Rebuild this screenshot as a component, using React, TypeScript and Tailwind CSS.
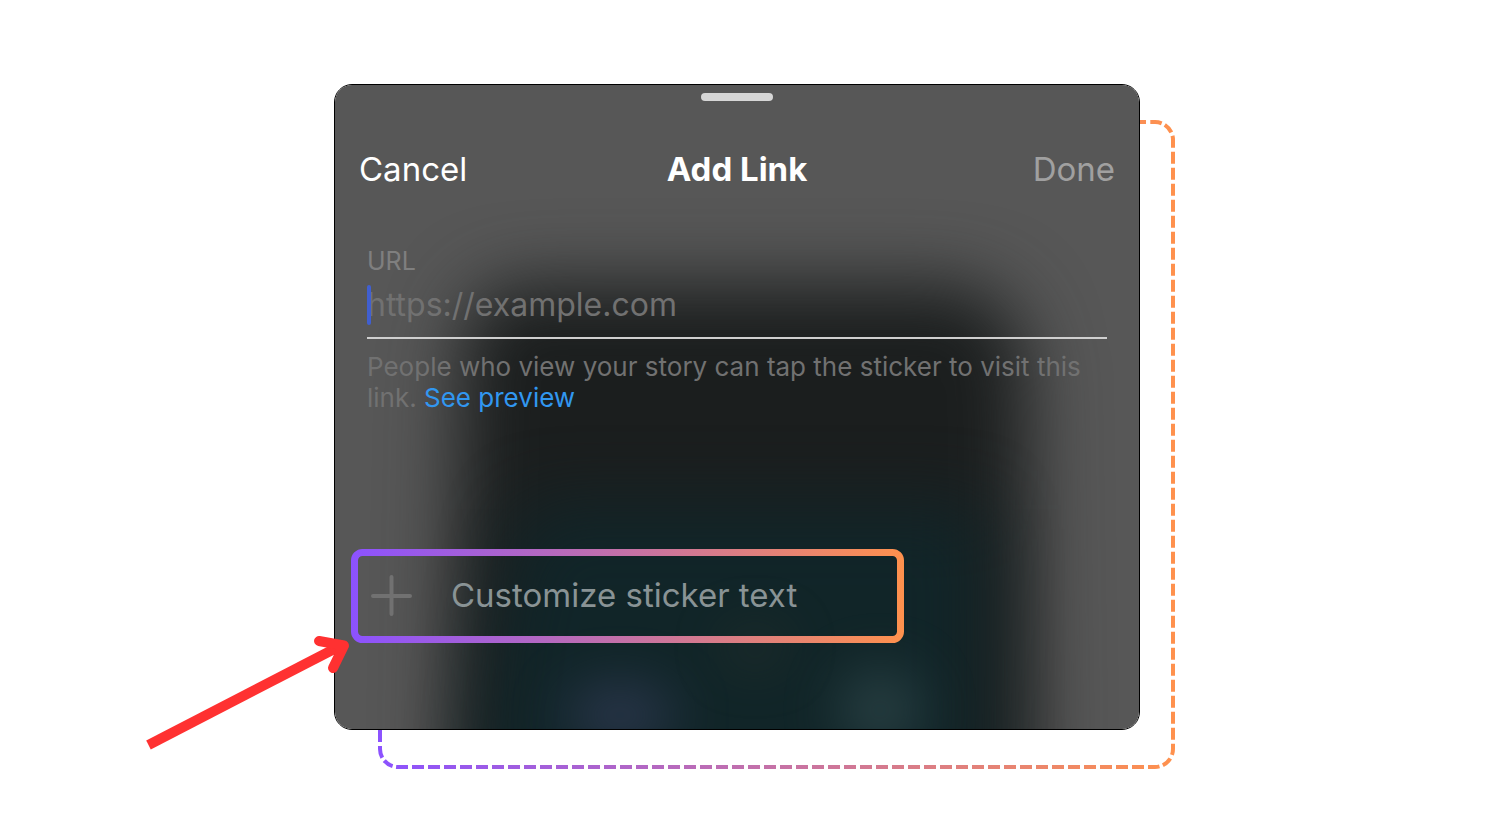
import React from "react";

function SheetBackdrop() {
  return (
    <svg
      aria-hidden="true"
      className="absolute inset-0 -z-10 h-full w-full bg-[#575757]"
      viewBox="0 0 804 644"
      preserveAspectRatio="none"
    >
      <defs>
        <filter id="soft" filterUnits="userSpaceOnUse" x="-150" y="0" width="1100" height="900" colorInterpolationFilters="sRGB">
          <feGaussianBlur stdDeviation="36" />
        </filter>
        <filter id="glow" filterUnits="userSpaceOnUse" x="-150" y="200" width="1100" height="700" colorInterpolationFilters="sRGB">
          <feGaussianBlur stdDeviation="28" />
        </filter>
      </defs>
      <path
        d="M190 200H610Q685 200 692 290L700 800H114L126 270Q132 200 190 200Z"
        fill="#1b1e1e"
        filter="url(#soft)"
      />
      <path d="M190 420H650V800H130L160 540Z" fill="#10262a" opacity="0.9" filter="url(#soft)" />
      <ellipse cx="285" cy="630" rx="55" ry="30" fill="#333c58" opacity="0.8" filter="url(#glow)" />
      <ellipse cx="545" cy="625" rx="40" ry="40" fill="#30484c" opacity="0.8" filter="url(#glow)" />
      <ellipse cx="420" cy="562" rx="30" ry="14" fill="#3a3a30" opacity="0.6" filter="url(#glow)" />
    </svg>
  );
}

function DashedFrame() {
  return (
    <svg
      aria-hidden="true"
      className="absolute top-9 left-11 -z-10 h-[calc(100%+3px)] w-[calc(100%-9px)]"
      viewBox="378 120 797 649"
      preserveAspectRatio="none"
      fill="none"
    >
      <defs>
        <linearGradient id="frame" gradientUnits="userSpaceOnUse" x1="378" y1="0" x2="1175" y2="0">
          <stop stopColor="#8c52ff" />
          <stop offset="1" stopColor="#ff914d" />
        </linearGradient>
      </defs>
      <g stroke="url(#frame)" strokeWidth="4">
        <path d="M1138 122H1155A18 18 0 0 1 1173 140" strokeDasharray="8 4.3 11.5 3.5 10 3.5 20" />
        <path d="M1173 140V749" strokeDasharray="12 4" strokeDashoffset="4.3" />
        <path d="M1173 749A18 18 0 0 1 1155 767" strokeDasharray="6 4 10 3.5 10" />
        <path d="M1155 767H398" strokeDasharray="12 4" strokeDashoffset="5" />
        <path d="M398 767A18 18 0 0 1 380 749" strokeDasharray="2 3.5 10 3.5 12" />
        <path d="M380 749V710" strokeDasharray="12 4" strokeDashoffset="9" />
      </g>
    </svg>
  );
}

function Arrow() {
  return (
    <svg
      aria-hidden="true"
      className="pointer-events-none absolute top-[548px] -left-[190px] h-[122px] w-[210px]"
      viewBox="144 632 210 122"
      fill="none"
      stroke="#ff3131"
    >
      <path d="M148.500 745L340 646" strokeWidth="10" />
      <path d="M319 641L344 645.500L333 668" strokeWidth="10" strokeLinecap="round" strokeLinejoin="round" />
    </svg>
  );
}

export default function App() {
  return (
    <main className="min-h-screen bg-white pt-21 pr-6 pb-24 font-['Inter',sans-serif]">
      <div className="relative isolate mx-auto w-full max-w-[806px]">
        <DashedFrame />
        <section
          aria-labelledby="sheet-title"
          className="relative isolate overflow-hidden rounded-[18px] border border-black px-6 pt-2 pb-[85px]"
        >
          <SheetBackdrop />
          <div className="mx-auto h-2 w-[72px] rounded-full bg-[#d6d6d6]" />
          <header className="mt-12 grid grid-cols-3 items-center text-[33px] leading-10 text-white">
            <button type="button" className="justify-self-start">Cancel</button>
            <h1 id="sheet-title" className="justify-self-center font-bold">Add Link</h1>
            <button type="button" disabled className="justify-self-end text-[#a0a0a0]">Done</button>
          </header>

          <div className="mt-14 px-2 text-[#717171]">
            <label htmlFor="url" className="block text-[25px] leading-8 text-[#7f7f7f]">URL</label>
            <div className="relative mt-2 border-b-2 border-[#cfcfcf] pb-3">
              <input
                id="url"
                type="url"
                placeholder="https://example.com"
                className="block h-10 w-full bg-transparent text-[32px] leading-10 outline-none placeholder:text-[#717171]"
              />
              <span className="absolute top-0 left-0 h-10 w-1 rounded-sm bg-[#405fd0]" />
            </div>
            <p className="mt-3 text-[26px] leading-[31px]">
              People who view your story can tap the sticker to visit this link.{" "}
              <a href="#preview" className="text-[#3197f0]">See preview</a>
            </p>
          </div>

          <button
            type="button"
            className="relative mt-[135px] -ml-2 flex h-24 w-full max-w-[554px] items-center gap-[38px] pl-5 text-[33px] text-[#899395]"
          >
            <svg aria-hidden="true" className="absolute inset-0 h-full w-full" viewBox="0 0 554 96" preserveAspectRatio="none" fill="none">
              <defs>
                <linearGradient id="highlight" gradientUnits="userSpaceOnUse" x1="0" y1="0" x2="554" y2="0">
                  <stop stopColor="#8c52ff" />
                  <stop offset="1" stopColor="#ff914d" />
                </linearGradient>
              </defs>
              <rect x="3.500" y="4.500" width="546" height="87" rx="8" stroke="url(#highlight)" strokeWidth="7" />
            </svg>
            <svg aria-hidden="true" className="size-[42px]" viewBox="0 0 42 42" stroke="#717171" strokeWidth="4" strokeLinecap="round">
              <path d="M2 21H39M20.500 2V39" />
            </svg>
            Customize sticker text
          </button>
        </section>
        <Arrow />
      </div>
    </main>
  );
}
